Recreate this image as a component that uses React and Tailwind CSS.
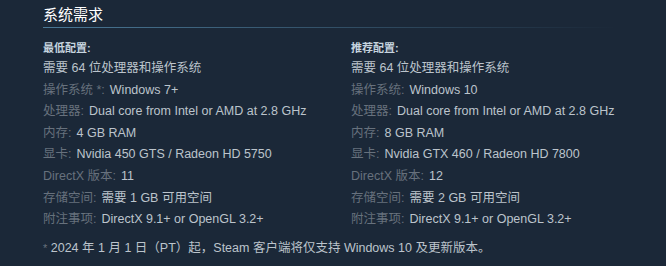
export default function App() {
  const left = [
    ["操作系统 *:", "Windows 7+"],
    ["处理器:", "Dual core from Intel or AMD at 2.8 GHz"],
    ["内存:", "4 GB RAM"],
    ["显卡:", "Nvidia 450 GTS / Radeon HD 5750"],
    ["DirectX 版本:", "11"],
    ["存储空间:", "需要 1 GB 可用空间"],
    ["附注事项:", "DirectX 9.1+ or OpenGL 3.2+"],
  ];
  const right = [
    ["操作系统:", "Windows 10"],
    ["处理器:", "Dual core from Intel or AMD at 2.8 GHz"],
    ["内存:", "8 GB RAM"],
    ["显卡:", "Nvidia GTX 460 / Radeon HD 7800"],
    ["DirectX 版本:", "12"],
    ["存储空间:", "需要 2 GB 可用空间"],
    ["附注事项:", "DirectX 9.1+ or OpenGL 3.2+"],
  ];
  const Col = ({ title, rows, w }) => (
    <div className={w}>
      <div className="text-[11px] font-bold text-[#c6d4df] leading-[14px] mb-[3px]">{title}</div>
      <div className="text-[12.5px] leading-[21.6px] text-[#bcc4cc]">
        <div>需要 64 位处理器和操作系统</div>
        {rows.map(([k, v], i) => (
          <div key={i} className="whitespace-nowrap">
            <span className="text-[#67717d]">{k}</span>
            <span className="ml-[5px]">{v}</span>
          </div>
        ))}
      </div>
    </div>
  );
  return (
    <div
      className="w-[666px] h-[266px] bg-[#1b2838] px-[43px] pt-[5px]"
      style={{ fontFamily: '"Liberation Sans", Arial, "Noto Sans CJK SC", sans-serif' }}
    >
      <div className="text-[15px] leading-[20px] text-white">系统需求</div>
      <div className="h-px w-[574px] mt-[2px] bg-gradient-to-r from-[#4a7896] to-transparent" />
      <div className="flex mt-[13px]">
        <Col title="最低配置:" rows={left} w="w-[308px] shrink-0" />
        <Col title="推荐配置:" rows={right} w="flex-1" />
      </div>
      <div className="mt-[7px] text-[12.5px] leading-[20px] text-[#bcc4cc]">
        <span className="text-[#67717d] text-[11px]">*</span> 2024 年 1 月 1 日（PT）起，Steam 客户端将仅支持 Windows 10 及更新版本。
      </div>
    </div>
  );
}
